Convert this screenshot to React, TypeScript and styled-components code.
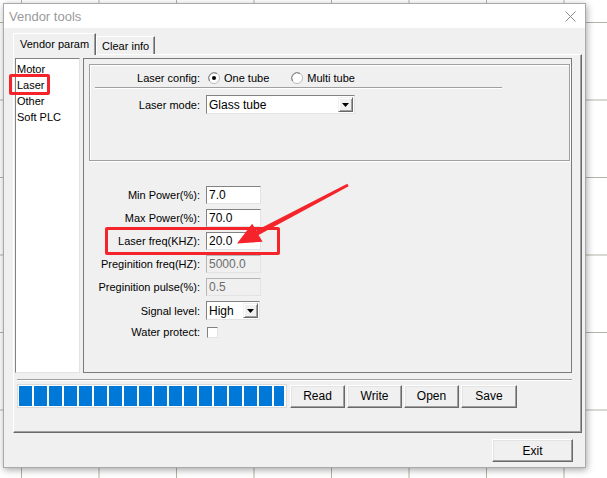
import React from "react";
import styled, { createGlobalStyle } from "styled-components";

const GlobalStyle = createGlobalStyle`
  html, body {
    margin: 0;
    padding: 0;
    width: 607px;
    height: 478px;
    overflow: hidden;
  }
  body {
    font-family: "Liberation Sans", Arial, sans-serif;
    font-size: 11px;
    color: #000;
    background-color: #fff;
    background-image:
      linear-gradient(to right, #b3b3a3 1px, transparent 1px),
      linear-gradient(to bottom, #b3b3a3 1px, transparent 1px);
    background-size: 77.5px 77.5px;
    background-position: 21px 22px;
  }
`;

const Stage = styled.div`
  position: relative;
  width: 607px;
  height: 478px;
  overflow: hidden;
`;

const Window = styled.div`
  box-sizing: border-box;
  margin: 3px 0 0 3px;
  width: 583px;
  height: 465px;
  display: flex;
  flex-direction: column;
  background: #f0f0f0;
  border: 1px solid #a9a9a9;
  box-shadow: 1px 2px 7px rgba(0, 0, 0, 0.35);
`;

const TitleBar = styled.div`
  height: 24px;
  display: flex;
  align-items: center;
  justify-content: space-between;
  padding: 0 9px 0 5px;
  background: #fff;
  .title {
    font-size: 13px;
    color: #9a9a9a;
  }
`;

const Body = styled.div`
  flex: 1;
  display: flex;
  flex-direction: column;
  padding: 5px 3px 0 9px;
`;

const TabStrip = styled.div`
  display: flex;
  align-items: flex-end;
  height: 22px;
  margin-bottom: -1px;
  position: relative;
  z-index: 1;
`;

const Tab = styled.div<{ $active?: boolean }>`
  box-sizing: border-box;
  height: ${(p) => (p.$active ? "22px" : "18px")};
  margin-bottom: ${(p) => (p.$active ? "0" : "1px")};
  padding: ${(p) => (p.$active ? "0 6px 2px 6px" : "0 5px")};
  display: flex;
  align-items: center;
  background: #f0f0f0;
  border-top: 1px solid #fff;
  border-left: 1px solid #fff;
  border-right: 1px solid #696969;
  box-shadow: inset -1px 0 0 #a0a0a0;
  white-space: nowrap;
`;

const TabPage = styled.div`
  box-sizing: border-box;
  height: 379px;
  display: flex;
  flex-direction: column;
  padding: 3px 9px 0 1px;
  border-style: solid;
  border-width: 1px;
  border-color: #fff #696969 #696969 #fff;
  box-shadow: inset -1px -1px 0 #a0a0a0;
`;

const ContentRow = styled.div`
  display: flex;
  gap: 3px;
  height: 315px;
`;

const ListBox = styled.div`
  box-sizing: border-box;
  width: 65px;
  background: #fff;
  border-style: solid;
  border-width: 1px;
  border-color: #828282 #e3e3e3 #e3e3e3 #828282;
  padding: 2px 2px 2px 1px;
`;

const ListItem = styled.div`
  height: 16px;
  line-height: 16px;
  white-space: nowrap;
`;

const Panel = styled.div`
  box-sizing: border-box;
  flex: 1;
  border: 1px solid #7a7a7a;
  padding: 5px 1px 0 5px;
  display: flex;
  flex-direction: column;
`;

const GroupBox = styled.div`
  box-sizing: border-box;
  width: 481px;
  height: 97px;
  border: 1px solid #a0a0a0;
  box-shadow: inset 1px 1px 0 #fff, 1px 1px 0 #fff;
  padding-top: 4px;
  display: flex;
  flex-direction: column;
`;

const Row = styled.div<{ $height?: number; $gapTop?: number }>`
  display: flex;
  align-items: center;
  height: ${(p) => p.$height ?? 18}px;
  margin-top: ${(p) => p.$gapTop ?? 0}px;
  gap: 6px;
`;

const Label = styled.div<{ $width: number }>`
  width: ${(p) => p.$width}px;
  text-align: right;
  white-space: nowrap;
`;

const Etched = styled.div`
  width: 407px;
  height: 0;
  margin-left: 5px;
  border-top: 1px solid #a0a0a0;
  border-bottom: 1px solid #fff;
`;

const RadioGroup = styled.div`
  display: flex;
  align-items: center;
  gap: 20px;
`;

const RadioItem = styled.label`
  display: flex;
  align-items: center;
  gap: 4px;
  margin-left: 2px;
`;

const Fields = styled.div`
  margin-top: 25px;
  display: flex;
  flex-direction: column;
  gap: 5px;
`;

const TextInput = styled.div<{ $disabled?: boolean }>`
  box-sizing: border-box;
  width: 55px;
  height: 18px;
  padding-left: 2px;
  display: flex;
  align-items: center;
  background: ${(p) => (p.$disabled ? "#f0f0f0" : "#fff")};
  color: ${(p) => (p.$disabled ? "#6d6d6d" : "#000")};
  border-style: solid;
  border-width: 1px;
  border-color: ${(p) =>
    p.$disabled ? "#b5b5b5 #e3e3e3 #e3e3e3 #b5b5b5" : "#828282 #e3e3e3 #e3e3e3 #828282"};
  font-size: 12px;
`;

const Combo = styled.div<{ $width: number }>`
  box-sizing: border-box;
  width: ${(p) => p.$width}px;
  height: 19px;
  display: flex;
  align-items: center;
  justify-content: space-between;
  background: #fff;
  border-style: solid;
  border-width: 1px;
  border-color: #828282 #e3e3e3 #e3e3e3 #828282;
  padding: 0 1px 0 2px;
  font-size: 12px;
`;

const ComboButton = styled.div`
  box-sizing: border-box;
  width: 15px;
  height: 15px;
  display: flex;
  align-items: center;
  justify-content: center;
  background: #f0f0f0;
  border-style: solid;
  border-width: 1px;
  border-color: #f0f0f0 #696969 #696969 #f0f0f0;
  box-shadow: inset 1px 1px 0 #fff, inset -1px -1px 0 #a0a0a0;
`;

const CheckBox = styled.div`
  box-sizing: border-box;
  width: 11px;
  height: 11px;
  margin-left: 1px;
  background: #fff;
  border-style: solid;
  border-width: 1px;
  border-color: #828282 #e3e3e3 #e3e3e3 #828282;
`;

const Separator = styled.div`
  margin: 6px 0 0 2px;
  height: 0;
  border-top: 1px solid #a0a0a0;
  border-bottom: 1px solid #fff;
`;

const BottomRow = styled.div`
  display: flex;
  align-items: center;
  margin: 3px 0 0 2px;
`;

const Progress = styled.div`
  box-sizing: border-box;
  width: 270px;
  height: 24px;
  margin-right: 3px;
  padding: 1px;
  background: #fff;
  border: 1px solid #d9d9d9;
  overflow: hidden;
`;

const Blocks = styled.div`
  display: flex;
  gap: 2px;
  width: 265px;
  height: 20px;
  overflow: hidden;
`;

const Block = styled.div`
  flex: 0 0 13px;
  height: 20px;
  background: #0078d7;
`;

const Button = styled.div<{ $width: number }>`
  box-sizing: border-box;
  width: ${(p) => p.$width}px;
  height: 23px;
  margin-right: 2px;
  display: flex;
  align-items: center;
  justify-content: center;
  background: #f0f0f0;
  border-style: solid;
  border-width: 1px;
  border-color: #fff #696969 #696969 #fff;
  box-shadow: inset -1px -1px 0 #a0a0a0, inset 1px 1px 0 #e3e3e3;
  font-size: 12px;
`;

const Footer = styled.div`
  display: flex;
  justify-content: flex-end;
  padding: 6px 9px 0 0;
  ${Button} {
    margin-right: 0;
  }
`;

const Annotation = styled.div<{ $x: number; $y: number; $w: number; $h: number }>`
  position: absolute;
  left: ${(p) => p.$x}px;
  top: ${(p) => p.$y}px;
  width: ${(p) => p.$w}px;
  height: ${(p) => p.$h}px;
  box-sizing: border-box;
  border: 3px solid #f5242a;
  border-radius: 2px;
  pointer-events: none;
`;

const ArrowLayer = styled.svg`
  position: absolute;
  left: 0;
  top: 0;
  pointer-events: none;
`;

function Radio({ checked }: { checked?: boolean }) {
  return (
    <svg width="12" height="12" viewBox="0 0 12 12">
      <circle cx="6" cy="6" r="5.5" fill="#fff" stroke="#b9b9b9" />
      <path d="M1.5 9 A5.5 5.5 0 0 1 9 1.5" fill="none" stroke="#7d7d7d" />
      {checked && <circle cx="6" cy="6" r="2" fill="#000" />}
    </svg>
  );
}

function DropArrow() {
  return (
    <svg width="7" height="4" viewBox="0 0 7 4">
      <path d="M0 0 H7 L3.5 4 Z" fill="#000" />
    </svg>
  );
}

const fields = [
  { label: "Min Power(%):", value: "7.0" },
  { label: "Max Power(%):", value: "70.0" },
  { label: "Laser freq(KHZ):", value: "20.0" },
  { label: "Preginition freq(HZ):", value: "5000.0", disabled: true },
  { label: "Preginition pulse(%):", value: "0.5", disabled: true },
];

export default function App() {
  return (
    <>
      <GlobalStyle />
      <Stage>
        <Window>
          <TitleBar>
            <span className="title">Vendor tools</span>
            <svg width="11" height="11" viewBox="0 0 11 11">
              <path d="M0.5 0.5 L10.5 10.5 M10.5 0.5 L0.5 10.5" stroke="#8a8a8a" strokeWidth="1" />
            </svg>
          </TitleBar>
          <Body>
            <TabStrip>
              <Tab $active>Vendor param</Tab>
              <Tab>Clear info</Tab>
            </TabStrip>
            <TabPage>
              <ContentRow>
                <ListBox>
                  <ListItem>Motor</ListItem>
                  <ListItem>Laser</ListItem>
                  <ListItem>Other</ListItem>
                  <ListItem>Soft PLC</ListItem>
                </ListBox>
                <Panel>
                  <GroupBox>
                    <Row>
                      <Label $width={110}>Laser config:</Label>
                      <RadioGroup>
                        <RadioItem>
                          <Radio checked />
                          One tube
                        </RadioItem>
                        <RadioItem>
                          <Radio />
                          Multi tube
                        </RadioItem>
                      </RadioGroup>
                    </Row>
                    <Etched />
                    <Row $height={19} $gapTop={6}>
                      <Label $width={110}>Laser mode:</Label>
                      <Combo $width={149}>
                        Glass tube
                        <ComboButton>
                          <DropArrow />
                        </ComboButton>
                      </Combo>
                    </Row>
                  </GroupBox>
                  <Fields>
                    {fields.map((f) => (
                      <Row key={f.label}>
                        <Label $width={111}>{f.label}</Label>
                        <TextInput $disabled={f.disabled}>{f.value}</TextInput>
                      </Row>
                    ))}
                    <Row $height={19}>
                      <Label $width={111}>Signal level:</Label>
                      <Combo $width={54}>
                        High
                        <ComboButton>
                          <DropArrow />
                        </ComboButton>
                      </Combo>
                    </Row>
                    <Row $height={14}>
                      <Label $width={111}>Water protect:</Label>
                      <CheckBox />
                    </Row>
                  </Fields>
                </Panel>
              </ContentRow>
              <Separator />
              <BottomRow>
                <Progress>
                  <Blocks>
                    {Array.from({ length: 18 }).map((_, i) => (
                      <Block key={i} />
                    ))}
                  </Blocks>
                </Progress>
                <Button $width={55}>Read</Button>
                <Button $width={55}>Write</Button>
                <Button $width={55}>Open</Button>
                <Button $width={56}>Save</Button>
              </BottomRow>
            </TabPage>
            <Footer>
              <Button $width={81}>Exit</Button>
            </Footer>
          </Body>
        </Window>

        <Annotation $x={9} $y={74} $w={41} $h={21} />
        <Annotation $x={105} $y={227} $w={175} $h={28} />
        <ArrowLayer width="607" height="478" viewBox="0 0 607 478">
          <polygon
            points="347.3,183.8 348.7,186.2 258.6,234.9 262.6,241.7 237,243.5 252.2,223.7 256.2,230.5"
            fill="#f5242a"
          />
        </ArrowLayer>
      </Stage>
    </>
  );
}
